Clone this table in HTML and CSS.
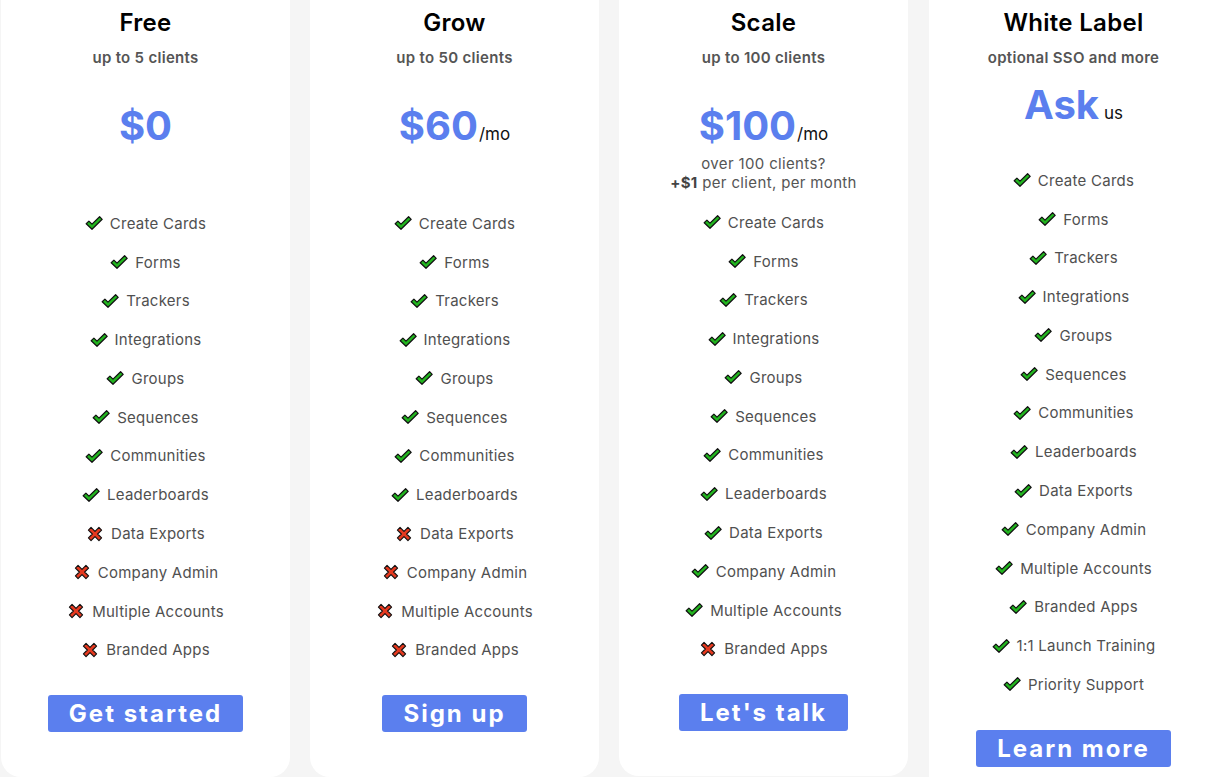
FILE: index.html
```html
<!DOCTYPE html>
<html>
<head>
    <link rel="stylesheet" href="styles.css">
</head>
<body>
    <svg class="defs" width="0" height="0">
        <symbol id="check" viewBox="0 0 18 15">
            <path d="M1.2 8.2 L3.9 5.6 L7 8.6 L14.6 1.2 L17.2 3.8 L7 13.8 Z" fill="#22b41f" stroke="#111" stroke-width="1.2" stroke-linejoin="round"/>
        </symbol>
        <symbol id="cross" viewBox="0 0 17 17">
            <path d="M1.5 4.3 L4.3 1.5 L8.5 5.7 L12.7 1.5 L15.5 4.3 L11.3 8.5 L15.5 12.7 L12.7 15.5 L8.5 11.3 L4.3 15.5 L1.5 12.7 L5.7 8.5 Z" fill="#e5391f" stroke="#111" stroke-width="1.2" stroke-linejoin="round"/>
        </symbol>
    </svg>

    <div class="plans">
        <!-- Free -->
        <div class="plan">
            <div class="plan-title">Free</div>
            <div class="plan-sub">up to 5 clients</div>
            <div class="price"><span class="amount">$0</span></div>
            <div class="price-note"></div>
            <ul class="features">
                <li><svg class="ico"><use href="#check"/></svg>Create Cards</li>
                <li><svg class="ico"><use href="#check"/></svg>Forms</li>
                <li><svg class="ico"><use href="#check"/></svg>Trackers</li>
                <li><svg class="ico"><use href="#check"/></svg>Integrations</li>
                <li><svg class="ico"><use href="#check"/></svg>Groups</li>
                <li><svg class="ico"><use href="#check"/></svg>Sequences</li>
                <li><svg class="ico"><use href="#check"/></svg>Communities</li>
                <li><svg class="ico"><use href="#check"/></svg>Leaderboards</li>
                <li><svg class="ico"><use href="#cross"/></svg>Data Exports</li>
                <li><svg class="ico"><use href="#cross"/></svg>Company Admin</li>
                <li><svg class="ico"><use href="#cross"/></svg>Multiple Accounts</li>
                <li><svg class="ico"><use href="#cross"/></svg>Branded Apps</li>
            </ul>
            <button class="cta">Get started</button>
        </div>

        <!-- Grow -->
        <div class="plan">
            <div class="plan-title">Grow</div>
            <div class="plan-sub">up to 50 clients</div>
            <div class="price"><span class="amount">$60</span><span class="per">/mo</span></div>
            <div class="price-note"></div>
            <ul class="features">
                <li><svg class="ico"><use href="#check"/></svg>Create Cards</li>
                <li><svg class="ico"><use href="#check"/></svg>Forms</li>
                <li><svg class="ico"><use href="#check"/></svg>Trackers</li>
                <li><svg class="ico"><use href="#check"/></svg>Integrations</li>
                <li><svg class="ico"><use href="#check"/></svg>Groups</li>
                <li><svg class="ico"><use href="#check"/></svg>Sequences</li>
                <li><svg class="ico"><use href="#check"/></svg>Communities</li>
                <li><svg class="ico"><use href="#check"/></svg>Leaderboards</li>
                <li><svg class="ico"><use href="#cross"/></svg>Data Exports</li>
                <li><svg class="ico"><use href="#cross"/></svg>Company Admin</li>
                <li><svg class="ico"><use href="#cross"/></svg>Multiple Accounts</li>
                <li><svg class="ico"><use href="#cross"/></svg>Branded Apps</li>
            </ul>
            <button class="cta">Sign up</button>
        </div>

        <!-- Scale -->
        <div class="plan plan-scale">
            <div class="plan-title">Scale</div>
            <div class="plan-sub">up to 100 clients</div>
            <div class="price"><span class="amount">$100</span><span class="per">/mo</span></div>
            <div class="price-note">over 100 clients?<br><b>+$1</b> per client, per month</div>
            <ul class="features">
                <li><svg class="ico"><use href="#check"/></svg>Create Cards</li>
                <li><svg class="ico"><use href="#check"/></svg>Forms</li>
                <li><svg class="ico"><use href="#check"/></svg>Trackers</li>
                <li><svg class="ico"><use href="#check"/></svg>Integrations</li>
                <li><svg class="ico"><use href="#check"/></svg>Groups</li>
                <li><svg class="ico"><use href="#check"/></svg>Sequences</li>
                <li><svg class="ico"><use href="#check"/></svg>Communities</li>
                <li><svg class="ico"><use href="#check"/></svg>Leaderboards</li>
                <li><svg class="ico"><use href="#check"/></svg>Data Exports</li>
                <li><svg class="ico"><use href="#check"/></svg>Company Admin</li>
                <li><svg class="ico"><use href="#check"/></svg>Multiple Accounts</li>
                <li><svg class="ico"><use href="#cross"/></svg>Branded Apps</li>
            </ul>
            <button class="cta">Let's talk</button>
        </div>

        <!-- White Label -->
        <div class="plan plan-ask">
            <div class="plan-title">White Label</div>
            <div class="plan-sub">optional SSO and more</div>
            <div class="price"><span class="amount">Ask</span><span class="per us">us</span></div>
            <div class="price-note"></div>
            <ul class="features">
                <li><svg class="ico"><use href="#check"/></svg>Create Cards</li>
                <li><svg class="ico"><use href="#check"/></svg>Forms</li>
                <li><svg class="ico"><use href="#check"/></svg>Trackers</li>
                <li><svg class="ico"><use href="#check"/></svg>Integrations</li>
                <li><svg class="ico"><use href="#check"/></svg>Groups</li>
                <li><svg class="ico"><use href="#check"/></svg>Sequences</li>
                <li><svg class="ico"><use href="#check"/></svg>Communities</li>
                <li><svg class="ico"><use href="#check"/></svg>Leaderboards</li>
                <li><svg class="ico"><use href="#check"/></svg>Data Exports</li>
                <li><svg class="ico"><use href="#check"/></svg>Company Admin</li>
                <li><svg class="ico"><use href="#check"/></svg>Multiple Accounts</li>
                <li><svg class="ico"><use href="#check"/></svg>Branded Apps</li>
                <li><svg class="ico"><use href="#check"/></svg>1:1 Launch Training</li>
                <li><svg class="ico"><use href="#check"/></svg>Priority Support</li>
            </ul>
            <button class="cta">Learn more</button>
        </div>
    </div>
</body>
</html>
```

FILE: styles.css
```css
body {
    font-family: 'Inter', 'Noto Sans', sans-serif;
    margin: 0;
    padding: 0;
    background-color: #F5F5F5;
    overflow: hidden;
    height: 100vh;
}
.defs {
    position: absolute;
    width: 0;
    height: 0;
}
.plans {
    display: flex;
    align-items: flex-start;
    gap: 20px;
    padding-left: 1px;
}
.plan {
    flex: 0 0 289px;
    background-color: #FFF;
    border-radius: 0 0 20px 20px;
    display: flex;
    flex-direction: column;
    align-items: center;
    padding-bottom: 45px;
}
.plan-ask {
    margin-left: 1px;
}
.plan-title {
    margin-top: 9px;
    font-size: 24px;
    line-height: 28px;
    font-weight: 600;
    color: #000;
    letter-spacing: 0.3px;
}
.plan-sub {
    margin-top: 11px;
    font-size: 15px;
    line-height: 20px;
    font-weight: 600;
    color: #555;
    letter-spacing: 0.3px;
}
.price {
    margin-top: 33px;
    height: 50px;
    display: flex;
    align-items: baseline;
    color: #5B7FEE;
}
.amount {
    font-size: 40px;
    line-height: 50px;
    font-weight: 700;
}
.per {
    font-size: 17px;
    color: #111;
    margin-left: 1px;
}
.per.us {
    margin-left: 5px;
}
.price-note {
    margin-top: 3px;
    min-height: 40px;
    font-size: 15px;
    line-height: 19px;
    color: #555;
    text-align: center;
    letter-spacing: 0.35px;
}
.price-note b {
    font-weight: 700;
    color: #444;
}
.plan-scale .price-note {
    min-height: 39px;
}
.plan-ask .price {
    margin-top: 12px;
}
.plan-ask .price-note {
    min-height: 18px;
}
.features {
    list-style: none;
    margin: 10px 0 0;
    padding: 0;
    width: 100%;
}
.features li {
    height: 38.77px;
    display: flex;
    align-items: center;
    justify-content: center;
    font-size: 15px;
    color: #505050;
    letter-spacing: 0.25px;
}
.ico {
    width: 18px;
    height: 16px;
    margin-right: 7px;
    flex: none;
}
.cta {
    margin-top: 26px;
    height: 37px;
    padding: 0 21px;
    font-family: 'Inter', sans-serif;
    font-size: 24px;
    font-weight: 700;
    letter-spacing: 2px;
    color: #FFF;
    background-color: #5B7FEE;
    border: none;
    border-radius: 3px;
    cursor: pointer;
}
.cta:hover {
    background-color: #4A6EE0;
}
```
